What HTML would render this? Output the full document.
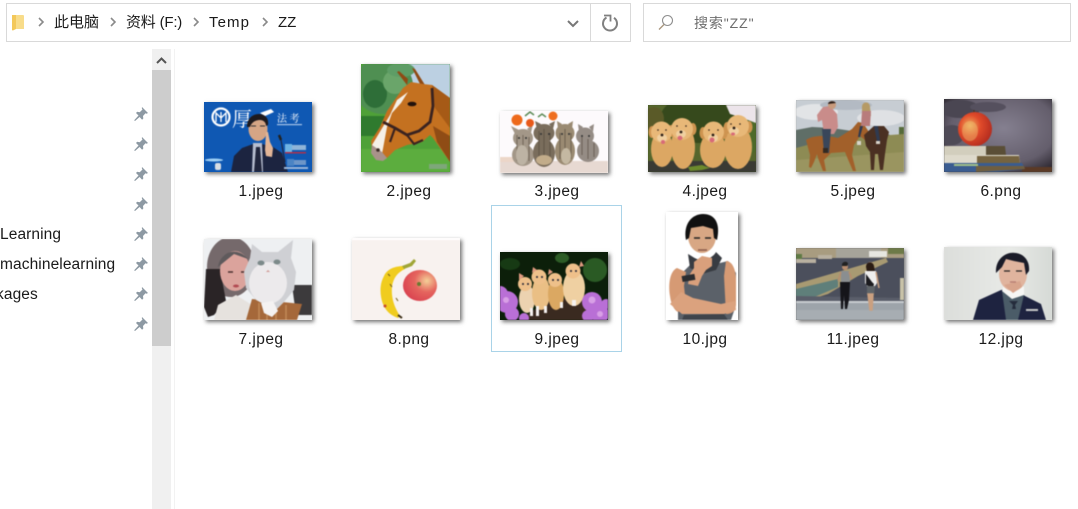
<!DOCTYPE html>
<html><head><meta charset="utf-8"><style>
html,body{margin:0;padding:0;background:#fff}
body{width:1078px;height:509px;position:relative;overflow:hidden;font-family:"Liberation Sans","Noto Sans CJK SC",sans-serif;color:#1a1a1a}
.a{position:absolute}
.t{position:absolute;white-space:nowrap;font-size:15.5px;line-height:20px}
.l{position:absolute;white-space:nowrap;font-size:15.5px;line-height:20px;text-align:center;width:130px;letter-spacing:.45px}
.i{position:absolute;overflow:hidden;box-shadow:2px 2px 4px rgba(0,0,0,.55)}
.i svg{display:block;filter:blur(.55px)}
.pin{position:absolute;left:133px;width:16px;height:16px}
</style></head><body>
<div class="a" style="left:6px;top:3px;width:623px;height:37px;border:1px solid #d9d9d9"></div>
<div class="a" style="left:590px;top:4px;width:1px;height:37px;background:#d9d9d9"></div>
<div class="a" style="left:643px;top:3px;width:426px;height:37px;border:1px solid #d9d9d9"></div>
<svg class="a" style="left:0;top:0" width="1078" height="48" fill="none">
<path d="M12 15h11.500l.5 1v13H14l-2 1.500z" fill="#f8dc8a"/><path d="M12 15h4v14l-3 1.500-1-.5z" fill="#f3c85a"/>
<path d="M39 18l4 4-4 4M111 18l4 4-4 4M194 18l4 4-4 4M263 18l4 4-4 4" stroke="#8a8a8a" stroke-width="1.600"/>
<path d="M568 21l5 5 5-5" stroke="#777" stroke-width="2"/>
<path d="M606.500 17.500a7 7 0 1 0 7.500 .3" stroke="#808080" stroke-width="2" fill="none"/><path d="M604 15.500h6.500v6" stroke="#808080" stroke-width="1.800" fill="none"/>
<circle cx="667.500" cy="20.500" r="5" stroke="#8f8f8f" stroke-width="1.100"/><path d="M664 24.500l-5 5" stroke="#a8957c" stroke-width="1.300"/>
</svg>
<div class="t" style="left:54px;top:13px;font-size:15px">此电脑</div>
<div class="t" style="left:126px;top:13px;font-size:15px;letter-spacing:-.2px">资料 (F:)</div>
<div class="t" style="left:209px;top:13px;font-size:15px;letter-spacing:1.100px">Temp</div>
<div class="t" style="left:278px;top:13px;font-size:15px">ZZ</div>
<div class="t" style="left:694px;top:13px;font-size:14px;color:#6d6d6d;letter-spacing:.9px">搜索"ZZ"</div>

<div class="a" style="left:152px;top:49px;width:19px;height:460px;background:#f0f0f0"></div>
<div class="a" style="left:152px;top:70px;width:19px;height:276px;background:#cdcdcd"></div>
<div class="a" style="left:174px;top:49px;width:1px;height:460px;background:#f2f2f2"></div>
<svg class="a" style="left:152px;top:49px" width="19" height="21" fill="none"><path d="M5 14l4.500-4.500L14 14" stroke="#555" stroke-width="2"/></svg>

<div class="t" style="left:0;top:225px;letter-spacing:.1px">Learning</div>
<div class="t" style="left:0;top:255px;letter-spacing:.1px">machinelearning</div>
<div class="t" style="left:-4px;top:285px;letter-spacing:.1px">kages</div>

<svg class="pin" style="top:106px" viewBox="0 0 16 16"><path d="M9 1l6 6-1.500 .8-1-.6-2.500 2.800.3 2.500-1.200 1.200-2.500-2.700L2 15l-.8-.8 4.300-4.700L3 7l1.200-1.200 2.500.4L9.500 3.500 8.800 2.300z" fill="#8d99a3"/></svg>
<svg class="pin" style="top:136px" viewBox="0 0 16 16"><path d="M9 1l6 6-1.500 .8-1-.6-2.500 2.800.3 2.500-1.200 1.200-2.500-2.700L2 15l-.8-.8 4.300-4.700L3 7l1.200-1.200 2.500.4L9.500 3.500 8.800 2.300z" fill="#8d99a3"/></svg>
<svg class="pin" style="top:166px" viewBox="0 0 16 16"><path d="M9 1l6 6-1.500 .8-1-.6-2.500 2.800.3 2.500-1.200 1.200-2.500-2.700L2 15l-.8-.8 4.300-4.700L3 7l1.200-1.200 2.500.4L9.500 3.500 8.800 2.300z" fill="#8d99a3"/></svg>
<svg class="pin" style="top:196px" viewBox="0 0 16 16"><path d="M9 1l6 6-1.500 .8-1-.6-2.500 2.800.3 2.500-1.200 1.200-2.500-2.700L2 15l-.8-.8 4.300-4.700L3 7l1.200-1.200 2.500.4L9.500 3.500 8.800 2.300z" fill="#8d99a3"/></svg>
<svg class="pin" style="top:226px" viewBox="0 0 16 16"><path d="M9 1l6 6-1.500 .8-1-.6-2.500 2.800.3 2.500-1.200 1.200-2.500-2.700L2 15l-.8-.8 4.300-4.700L3 7l1.200-1.200 2.500.4L9.500 3.500 8.800 2.300z" fill="#8d99a3"/></svg>
<svg class="pin" style="top:256px" viewBox="0 0 16 16"><path d="M9 1l6 6-1.500 .8-1-.6-2.500 2.800.3 2.500-1.200 1.200-2.500-2.700L2 15l-.8-.8 4.300-4.700L3 7l1.200-1.200 2.500.4L9.500 3.500 8.800 2.300z" fill="#8d99a3"/></svg>
<svg class="pin" style="top:286px" viewBox="0 0 16 16"><path d="M9 1l6 6-1.500 .8-1-.6-2.500 2.800.3 2.500-1.200 1.200-2.500-2.700L2 15l-.8-.8 4.300-4.700L3 7l1.200-1.200 2.500.4L9.500 3.500 8.800 2.300z" fill="#8d99a3"/></svg>
<svg class="pin" style="top:316px" viewBox="0 0 16 16"><path d="M9 1l6 6-1.500 .8-1-.6-2.500 2.800.3 2.500-1.200 1.200-2.500-2.700L2 15l-.8-.8 4.300-4.700L3 7l1.200-1.200 2.500.4L9.500 3.500 8.800 2.300z" fill="#8d99a3"/></svg>

<div class="a" style="left:491px;top:205px;width:129px;height:145px;border:1px solid #a9d3e8"></div>

<!-- 1 -->
<div class="i" style="left:204px;top:102px;width:108px;height:70px;background:#0f58b3"><svg width="108" height="70">
<rect width="108" height="70" fill="#0f58b3"/>
<circle cx="17" cy="15" r="8.500" fill="none" stroke="#fff" stroke-width="2.200"/><path d="M12 20v-9l5 5 5-5v9M17 10v10" stroke="#fff" stroke-width="1.300" fill="none"/>
<text x="28" y="24" font-size="20" fill="#fff" font-family="Noto Serif CJK SC">厚</text>
<path d="M56 11l11-4 3 3-9 4z" fill="#fff"/>
<text x="73" y="20" font-size="10" fill="#fff" font-family="Noto Serif CJK SC">法 考</text>
<rect x="73" y="22" width="25" height="1.200" fill="#a8c5e8"/>
<path d="M27 70l3-16 8-8 11-4h9l11 3 9 6 6 19z" fill="#1c2440"/>
<path d="M49 41h9l1 29H48z" fill="#b6bdcf"/><path d="M52 45h4l2 25h-8z" fill="#20253c"/>
<ellipse cx="54" cy="27" rx="9.500" ry="12" fill="#d5a585"/>
<path d="M43 25c0-9 6-13 12-13s10 4 9 11l-2 1c0-4-3-6-6-6s-8 1-10 7z" fill="#1e1a1e"/>
<path d="M47 24h5M56 24h5" stroke="#333" stroke-width="1"/>
<path d="M61 48l1-18h2l2 10 3 6-1 9-6-1z" fill="#e2b597"/>
<path d="M75 33l2 5" stroke="#222" stroke-width="2.500"/><path d="M77 38l4 22" stroke="#223" stroke-width="1"/>
<rect x="81" y="42" width="7" height="8" fill="#6fb4e4"/><rect x="88" y="43" width="14" height="5" fill="#8fb4d8"/><rect x="81" y="50" width="21" height="1.500" fill="#b0304a"/>
<rect x="83" y="57" width="7" height="7" fill="#4b84c4"/><rect x="90" y="58" width="12" height="5" fill="#6d96c8"/><rect x="80" y="65" width="24" height="2" fill="#9bb6d8"/>
<ellipse cx="10" cy="58" rx="9" ry="1.500" fill="#9fd0f5"/><rect x="11" y="61" width="6" height="7" fill="#d8dee4" rx="2"/>
</svg></div>
<div class="l" style="left:196px;top:182px">1.jpeg</div>

<!-- 2 -->
<div class="i" style="left:361px;top:64px;width:89px;height:108px;background:#4c9a3a"><svg width="89" height="108">
<rect width="89" height="108" fill="#4fa138"/>
<rect x="40" width="49" height="34" fill="#bcd0e2"/>
<ellipse cx="22" cy="22" rx="30" ry="28" fill="#4f8f52"/><ellipse cx="14" cy="30" rx="12" ry="14" fill="#2e6e38"/><ellipse cx="34" cy="18" rx="12" ry="12" fill="#6aa56a"/><ellipse cx="40" cy="6" rx="14" ry="7" fill="#5e9d66"/>
<rect y="52" width="40" height="20" fill="#2f7a2e"/>
<rect y="85" width="89" height="23" fill="#5cad3e"/>
<path d="M46 21L36 8l2-1 9 8zM61 24L51 4l3 1 10 16z" fill="#8f4a14"/>
<path d="M42 24l8-6 12 2 9 1 18 13v64L72 74l-3-3-8 7-15 3-12 5-8 8-8-2-7-7-1-8 9-14 7-16z" fill="#c47120"/>
<path d="M71 21l18 13v30L74 44z" fill="#a65a16"/><path d="M72 62l17 10v26L76 78z" fill="#8f4c15"/>
<path d="M47 28l-11 8-7 15-18 30 2 7 8 2 5-27 5-14 9-10z" fill="#f5f0e8"/>
<path d="M11 81l10 7 5 6-4 3-7-1-5-7z" fill="#a9928a"/><circle cx="17" cy="86" r="1.800" fill="#3b2a25"/>
<ellipse cx="51" cy="40" rx="4.500" ry="2.300" fill="#21120c"/>
<path d="M22 58l12 6 12 7 12-4 11-9 3-16-1-18" fill="none" stroke="#3a2320" stroke-width="2.800"/>
<path d="M46 71l7 9 9-4M34 64l-5 14" fill="none" stroke="#3a2320" stroke-width="2.200"/>
<rect x="68" y="100" width="18" height="5" fill="#7ea77a"/>
</svg></div>
<div class="l" style="left:344px;top:182px">2.jpeg</div>

<!-- 3 -->
<div class="i" style="left:500px;top:111px;width:108px;height:62px;background:#fdfafc"><svg width="108" height="62">
<rect width="108" height="62" fill="#fdfafc"/>
<rect y="50" width="108" height="12" fill="#e7d9d2"/><path d="M0 46h14v5H0z" fill="#ecd6c8"/>
<g fill="#a39788"><ellipse cx="23" cy="44" rx="11" ry="11"/><ellipse cx="23" cy="27" rx="10" ry="9"/><path d="M11 15l4 8 4-4zM33 13l-2 9-4-4z"/></g>
<g fill="#7a6d5c"><ellipse cx="44" cy="42" rx="11" ry="14"/><ellipse cx="44" cy="22" rx="10.500" ry="9"/><path d="M35 10l2 8 4-5zM55 10l-2 8-4-5z"/></g>
<g fill="#9a8a72"><ellipse cx="65" cy="40" rx="10" ry="14"/><ellipse cx="65" cy="22" rx="9.500" ry="9"/><path d="M57 10l1 8 4-5zM73 10l-1 8-4-5z"/></g>
<g fill="#958c85"><ellipse cx="88" cy="40" rx="11" ry="11"/><ellipse cx="85" cy="25" rx="9" ry="8.500"/><path d="M78 13l1 8 4-5zM94 13l-1 8-4-5z"/></g>
<path d="M17 24v26M23 24v28M29 26v24M39 20v30M44 18v34M50 22v28M60 22v26M65 18v30M71 22v26M82 26v18M88 28v20M94 32v14" stroke="#4f4538" stroke-width="1.100" opacity=".55"/>
<ellipse cx="44" cy="49" rx="8" ry="5" fill="#c2ac8a"/><ellipse cx="66" cy="45" rx="5" ry="8" fill="#c4b8a2"/><ellipse cx="22" cy="44" rx="6" ry="10" fill="#bdb3a4"/>
<g fill="#333"><circle cx="19" cy="27" r="1"/><circle cx="26" cy="27" r="1"/><circle cx="41" cy="23" r="1"/><circle cx="49" cy="23" r="1"/><circle cx="62" cy="23" r="1"/><circle cx="69" cy="23" r="1"/><circle cx="82" cy="25" r="1"/><circle cx="89" cy="25" r="1"/></g>
<path d="M25 5l5-4 4 3M38 6l4-3 4 3" stroke="#5b8a55" stroke-width="1.500" fill="none"/>
<circle cx="17" cy="9" r="5.500" fill="#ee6a1c"/><circle cx="30" cy="12" r="4" fill="#e8591a"/><circle cx="53" cy="5" r="4.500" fill="#ef6f20"/>
</svg></div>
<div class="l" style="left:492px;top:182px">3.jpeg</div>

<!-- 4 -->
<div class="i" style="left:648px;top:105px;width:108px;height:67px;background:#45572a"><svg width="108" height="67">
<rect width="108" height="67" fill="#55662c"/>
<ellipse cx="50" cy="14" rx="38" ry="24" fill="#36491c"/><ellipse cx="100" cy="30" rx="12" ry="20" fill="#4d6a2a"/><ellipse cx="6" cy="14" rx="10" ry="12" fill="#5a5a28"/>
<path d="M78 0h30v18l-16-6-10-3z" fill="#ece4ea"/>
<rect y="56" width="108" height="11" fill="#3a3a34"/>
<g fill="#dca763">
<ellipse cx="14" cy="44" rx="11" ry="18"/><ellipse cx="35" cy="42" rx="12" ry="22"/><ellipse cx="65" cy="45" rx="13" ry="18"/><ellipse cx="90" cy="42" rx="14" ry="22"/>
</g>
<g fill="#ce9450"><ellipse cx="4" cy="27" rx="3.500" ry="6"/><ellipse cx="23" cy="26" rx="3.500" ry="6"/><ellipse cx="45" cy="24" rx="3.500" ry="6"/><ellipse cx="55" cy="28" rx="3.500" ry="6"/><ellipse cx="76" cy="28" rx="3.500" ry="6"/><ellipse cx="79" cy="23" rx="3.500" ry="6"/><ellipse cx="101" cy="22" rx="3.500" ry="6"/></g>
<g fill="#e8b878"><circle cx="13.500" cy="27" r="10.500"/><circle cx="34" cy="24" r="11"/><circle cx="65.500" cy="27" r="10.500"/><circle cx="90" cy="21" r="11"/></g>
<g fill="#f0d0a0"><ellipse cx="14" cy="33" rx="5" ry="4"/><ellipse cx="33" cy="29" rx="5" ry="4"/><ellipse cx="65" cy="33" rx="5" ry="4"/><ellipse cx="86" cy="26" rx="5" ry="4"/></g>
<g fill="#2a1c14"><circle cx="14" cy="30" r="1.400"/><circle cx="33" cy="27" r="1.400"/><circle cx="65" cy="30" r="1.400"/><circle cx="86" cy="23" r="1.400"/><circle cx="10" cy="25" r=".8"/><circle cx="18" cy="25" r=".8"/><circle cx="29" cy="21" r=".8"/><circle cx="38" cy="21" r=".8"/><circle cx="61" cy="25" r=".8"/><circle cx="70" cy="25" r=".8"/><circle cx="83" cy="19" r=".8"/><circle cx="92" cy="19" r=".8"/></g>
<g fill="#d86a78"><ellipse cx="15" cy="37" rx="2" ry="2"/><ellipse cx="32" cy="33" rx="2.500" ry="2.200"/><ellipse cx="64" cy="35" rx="2.500" ry="2.500"/><ellipse cx="85" cy="29" rx="2" ry="1.500"/></g>
<path d="M40 62l14-2 8 3-8 2-12 1z" fill="#6c8a2c"/>
</svg></div>
<div class="l" style="left:640px;top:182px">4.jpeg</div>

<!-- 5 -->
<div class="i" style="left:796px;top:100px;width:108px;height:72px;background:#aaa"><svg width="108" height="72">
<rect width="108" height="72" fill="#c7cdd3"/>
<ellipse cx="20" cy="12" rx="22" ry="8" fill="#e2e4e6"/><ellipse cx="85" cy="18" rx="24" ry="8" fill="#dfe1e4"/><ellipse cx="50" cy="5" rx="26" ry="5" fill="#b3bac3"/>
<path d="M0 30l16-3 20 1 20 3 30 1 22 8v12H0z" fill="#5f6e67"/>
<rect x="103" y="27" width="5" height="8" fill="#566b3a"/>
<path d="M0 48l30-8 78-6v38H0z" fill="#8d8b54"/><path d="M0 60l108-8v20H0z" fill="#9a9560"/>
<path d="M10 40c8-6 24-4 32-2l14-9 6-7 5 1 6 9 2 8-5 1-6-5-6 9-2 10 4 16h-3l-6-14-2-5-14 1-7 7 2 11h-3l-5-13-1-4-3 8-3 6-2-1 1-12z" fill="#a2602a"/>
<path d="M28 34h10l4-7-1-13-7-8-7 1-6 8 1 7 4-2z" fill="#c98c8a"/>
<circle cx="36" cy="5" r="4" fill="#c89a7c"/><path d="M32 4c0-3 6-4 8-1z" fill="#2a1d18"/>
<path d="M26 29h9l-2 24-5 0z" fill="#39465a"/><rect x="27" y="48" width="5" height="5" fill="#332a22"/>
<path d="M68 35l10-9h10l5 6-2 8-2 14-2 16h-3l-2-16-3 0-1 16h-3l-1-18-4-6z" fill="#4a3022"/>
<circle cx="70" cy="6" r="3.500" fill="#d6b090"/><path d="M66 7c0-6 8-6 8 0l1 9h-9z" fill="#b59a65"/>
<path d="M66 11h9l-1 15h-9z" fill="#b87c7c"/>
<path d="M64 26h3l-3 11h-2zM78 26h4l2 15h-3z" fill="#2f3a50"/><rect x="61" y="41" width="4" height="4" fill="#d8d4ca"/><rect x="80" y="41" width="4" height="3" fill="#d8d4ca"/>
</svg></div>
<div class="l" style="left:788px;top:182px">5.jpeg</div>

<!-- 6 -->
<div class="i" style="left:944px;top:99px;width:108px;height:73px;background:#444"><svg width="108" height="73">
<defs><radialGradient id="b6" cx=".55" cy=".4" r=".75"><stop offset="0" stop-color="#858090"/><stop offset=".65" stop-color="#645e6c"/><stop offset="1" stop-color="#1f1a22"/></radialGradient>
<radialGradient id="a6" cx=".35" cy=".4" r=".7"><stop offset="0" stop-color="#f0b060"/><stop offset=".45" stop-color="#e04a2a"/><stop offset="1" stop-color="#b02a1e"/></radialGradient></defs>
<rect width="108" height="73" fill="url(#b6)"/>
<ellipse cx="16" cy="10" rx="20" ry="9" fill="#4a4652"/><ellipse cx="44" cy="8" rx="18" ry="5" fill="#55505e"/><ellipse cx="8" cy="36" rx="12" ry="10" fill="#4e4a56"/>
<path d="M78 68h30v5H78z" fill="#5b3a26"/>
<circle cx="31" cy="30" r="17" fill="url(#a6)"/><path d="M30 13v-2" stroke="#4a3216" stroke-width="1"/><ellipse cx="26" cy="32" rx="8" ry="10" fill="#f0c070" opacity=".45"/>
<path d="M0 47h60v1l1 8-9 1H0z" fill="#d2cebd"/><path d="M42 47h19l1 9H42z" fill="#5a4e36"/>
<path d="M0 56h75l1 8-26 3H0z" fill="#dedacc"/><path d="M33 57h42l1 7-43 3z" fill="#75633f"/>
<path d="M0 64h78l3 6-28 3H0z" fill="#3a5c90"/><path d="M32 67h48l1 3-49 3z" fill="#6f5e40"/><path d="M10 65h24v2H10z" fill="#a2c08a"/>
</svg></div>
<div class="l" style="left:936px;top:182px">6.png</div>

<!-- 7 -->
<div class="i" style="left:204px;top:239px;width:108px;height:81px;background:#eee"><svg width="108" height="81">
<rect width="108" height="81" fill="#eef0f2"/>
<path d="M88 46h20v30H92z" fill="#3c3a3c"/>
<ellipse cx="27" cy="28" rx="24" ry="30" fill="#75696b"/><path d="M2 30l14 0 6 32-12 14-6 2-4-10z" fill="#2a2426"/>
<ellipse cx="31" cy="32" rx="15" ry="20" fill="#dba39c"/>
<path d="M14 28c2-14 18-22 30-8l-14-5z" fill="#5f5a5c"/>
<path d="M24 33h5M37 33h5" stroke="#4a3030" stroke-width="1.500"/><ellipse cx="32" cy="47" rx="3" ry="1.500" fill="#b24a52"/>
<path d="M14 66l18-10 16 10 0 15H10z" fill="#e6e2de"/>
<path d="M48 60l50 5-5 16H42z" fill="#a5683a"/><path d="M55 64v17M63 66v15M72 66v15M82 66v15" stroke="#c28a58" stroke-width="1.500"/>
<path d="M48 5l10 8 16 0 15-12-2 18 5 14-2 18-10 12-8 8-6 2-6-8-8-4-10-12-2-16 6-14z" fill="#cfd0d4"/>
<ellipse cx="64" cy="44" rx="19" ry="21" fill="#eceaec"/><path d="M57 64l12-2 5 10-6 6-8-4z" fill="#f4f2f2"/>
<ellipse cx="57" cy="24" rx="3.500" ry="2.500" fill="#7c8a8a"/><ellipse cx="73" cy="23" rx="3.500" ry="2.500" fill="#7c8a8a"/><path d="M64 31l-2 2h4z" fill="#d09a96"/>
</svg></div>
<div class="l" style="left:196px;top:330px">7.jpeg</div>

<!-- 8 -->
<div class="i" style="left:352px;top:238px;width:108px;height:82px;background:#f8f2ef"><svg width="108" height="82">
<rect width="108" height="82" fill="#f8f2ef"/><rect width="108" height="2" fill="#fff"/>
<path d="M52 28c-9 0-17 3-20 10-5 9-4 20-1 28 3 7 7 11 15 14l2-2c-5-8-9-17-8-29 1-9 6-15 13-18z" fill="#f0cc1e"/>
<path d="M50 28l8-3 4-4 2 2-4 5-8 3z" fill="#a0a636"/>
<path d="M38 46l2 3M44 60l2 3M36 36l2 2" stroke="#6e5a18" stroke-width="1"/><circle cx="33" cy="68" r="1.500" fill="#c84a2a"/>
<path d="M46 77l4 3" stroke="#3a2c14" stroke-width="2"/>
<defs><radialGradient id="a8" cx=".7" cy=".35" r=".8"><stop offset="0" stop-color="#f4d098"/><stop offset=".45" stop-color="#e5655e"/><stop offset="1" stop-color="#d83e4e"/></radialGradient></defs>
<ellipse cx="68" cy="47.500" rx="17" ry="15.500" fill="url(#a8)"/><circle cx="67" cy="46" r="2" fill="#6a7a30"/>
</svg></div>
<div class="l" style="left:344px;top:330px">8.png</div>

<!-- 9 -->
<div class="i" style="left:500px;top:252px;width:108px;height:68px;background:#0c1f0a"><svg width="108" height="68">
<rect width="108" height="68" fill="#0c1f0a"/>
<ellipse cx="95" cy="18" rx="12" ry="12" fill="#2a5a24"/><ellipse cx="62" cy="6" rx="7" ry="5" fill="#2d5c26"/><ellipse cx="10" cy="12" rx="10" ry="6" fill="#173a14"/>
<path d="M28 62l18-12 40-8 10 20v6H28z" fill="#3a2a20"/>
<ellipse cx="27" cy="47" rx="8" ry="14" fill="#ecd2b0"/><ellipse cx="41" cy="41" rx="9" ry="17" fill="#eabf85"/><ellipse cx="56" cy="42" rx="8" ry="16" fill="#dba862"/><ellipse cx="74" cy="36" rx="11" ry="18" fill="#efd0a2"/>
<g fill="#eec08a"><circle cx="25" cy="32" r="7"/><circle cx="39" cy="25" r="7.500"/><circle cx="55" cy="28" r="7"/><circle cx="73" cy="19" r="7.500"/></g>
<g fill="#e09a80"><path d="M19 28l0-7 5 3zM32 21l1-6 4 3zM48 23l1-6 4 3zM79 15l2-6 3 5z"/></g>
<g fill="#223"><circle cx="23" cy="32" r="1"/><circle cx="28" cy="32" r="1"/><circle cx="37" cy="25" r="1"/><circle cx="42" cy="25" r="1"/><circle cx="53" cy="28" r="1"/><circle cx="58" cy="28" r="1"/><circle cx="71" cy="19" r="1"/><circle cx="76" cy="19" r="1"/></g>
<g fill="#f6f2f0"><rect x="30" y="56" width="3" height="8"/><rect x="36" y="54" width="3" height="10"/><rect x="44" y="54" width="3" height="7"/><rect x="60" y="50" width="3" height="6"/><rect x="72" y="48" width="4" height="6"/></g>
<g fill="#b96fd6"><circle cx="7" cy="50" r="11"/><circle cx="12" cy="62" r="7"/><circle cx="24" cy="66" r="5"/><circle cx="0" cy="42" r="8"/><circle cx="92" cy="50" r="10"/><circle cx="100" cy="62" r="9"/><circle cx="88" cy="64" r="6"/><circle cx="106" cy="52" r="5"/></g>
<g fill="#d8a0e6"><circle cx="6" cy="48" r="3"/><circle cx="92" cy="48" r="3.500"/><circle cx="100" cy="62" r="3"/></g>
</svg></div>
<div class="l" style="left:492px;top:330px">9.jpeg</div>

<!-- 10 -->
<div class="i" style="left:666px;top:212px;width:72px;height:108px;background:#fff"><svg width="72" height="108">
<rect width="72" height="108" fill="#fff"/>
<path d="M12 108V95l5-35 8-8h25l12-3 8 12-1 35-4 12z" fill="#5b6169"/>
<path d="M11 56c-7 3-9 16-7 28 1 8 4 14 8 16l8-8-2-18 2-14z" fill="#d69a74"/>
<path d="M60 49c6 0 10 8 10 20v24c-1 8-6 9-10 9l-2-38z" fill="#d69a74"/>
<path d="M4 92l12 10 42 0 12-4-1-9-14 3-28-6-12-6z" fill="#dba27e"/>
<path d="M18 103l40-1 4 6H16z" fill="#3f444b"/>
<path d="M22 42c4 2 8 6 14 6s12-4 14-8l6 6-6 12-14 4-12-6z" fill="#383c42"/>
<ellipse cx="36" cy="24" rx="14" ry="17" fill="#d8a784"/>
<path d="M20 28C17 12 26 2 37 2c11 0 18 8 14 26l-3-2-1-9-10-3-12 2-2 10z" fill="#111"/>
<path d="M28 26h6M39 26h6" stroke="#222" stroke-width="1.500"/><path d="M32 38h9" stroke="#8a5a4a" stroke-width="1.500"/>
<path d="M28 50l8-6 10 2 0 8-6 4-4 6-4 10-10-2 2-10 4-6z" fill="#d9a07c"/>
<rect x="16" y="63" width="13" height="6" fill="#2b2d30" transform="rotate(-10 22 66)"/>
</svg></div>
<div class="l" style="left:640px;top:330px">10.jpg</div>

<!-- 11 -->
<div class="i" style="left:796px;top:248px;width:108px;height:72px;background:#666"><svg width="108" height="72">
<rect width="108" height="72" fill="#4b4f5c"/>
<rect width="108" height="10" fill="#a89c80"/><path d="M40 0h45v10H40z" fill="#a6a49a"/><rect x="73" y="3" width="18" height="6" fill="#e6e6e0"/><rect x="92" y="0" width="16" height="6" fill="#6d7a48"/>
<path d="M0 6h6v5H0z" fill="#5f7a44"/><path d="M0 11h20v4H0zM22 7h14v4H22z" fill="#b8b0a0"/>
<path d="M0 36l90-26 2 4-30 14-30 18-32 10z" fill="#a89a72"/><path d="M0 41l42-10 0 8-26 11-16 5z" fill="#5f7f7a"/>
<path d="M0 48v8h108v-6z" fill="#5a5e6a"/>
<rect y="53" width="108" height="19" fill="#9da4aa"/><rect y="53" width="108" height="2" fill="#c8ccd0"/><path d="M0 62h108v10H0z" fill="#a7adb2"/>
<path d="M104 30h4v22h-4z" fill="#c8c2a8"/>
<g><circle cx="49" cy="19" r="3" fill="#b78c6e"/><path d="M46 16c1-3 6-3 6 0l-1 2-5 0z" fill="#222"/><path d="M45 23h8l1 11-9 0z" fill="#8a8e90"/><path d="M44 34h10l-1 18-2 9h-2l-1-14-1 14h-2z" fill="#15151a"/><path d="M45 24l-3 9M53 24l3 7" stroke="#b78c6e" stroke-width="1.500"/></g>
<g><circle cx="74" cy="17" r="3" fill="#caa080"/><path d="M70 19c0-6 7-6 8-1l1 6-8 0z" fill="#2a1c14"/><path d="M69 23h11l1 12-2 3h-8l-2-3z" fill="#eee"/><path d="M70 26l6 8 2 2-1 4-7-3z" fill="#1b1b1f"/><path d="M71 38h8l-1 9h-7z" fill="#5f6468"/><path d="M72 46l2 16h2l1-16zM80 24l3 16" stroke="#caa080" stroke-width="1.500" fill="#caa080"/></g>
</svg></div>
<div class="l" style="left:788px;top:330px">11.jpeg</div>

<!-- 12 -->
<div class="i" style="left:944px;top:247px;width:108px;height:73px;background:#e0e2df"><svg width="108" height="73">
<defs><linearGradient id="b12" x1="0" x2="1"><stop offset="0" stop-color="#dcdedb"/><stop offset=".6" stop-color="#e8eae7"/><stop offset="1" stop-color="#d6dad6"/></linearGradient></defs>
<rect width="108" height="73" fill="url(#b12)"/>
<path d="M29 73l6-20 22-10 14-2 10 8 16 8 5 16z" fill="#1e2340"/>
<path d="M58 44l13-4 9 8-6 25H62z" fill="#4b5c68"/><path d="M58 44l10 8 12-4 0-8-8-4-12 2z" fill="#f6f6f4"/><path d="M65 54h9l-3 4 1 4-4 0 1-4z" fill="#252c3c"/>
<ellipse cx="69" cy="27" rx="14" ry="17" fill="#e0b49e"/><path d="M60 38l9 8 9-6-2-6z" fill="#d8a48c"/>
<path d="M52 26c-1-14 10-22 20-20 8 1 14 8 13 18l-3 4-2-12-10-2-8-2-4 8z" fill="#1a1b28"/>
<path d="M60 24h6M72 24h6" stroke="#222" stroke-width="1.300"/><path d="M66 35h6" stroke="#b47a70" stroke-width="1.300"/>
<rect x="82" y="62" width="12" height="2" fill="#c8c8c8"/>
</svg></div>
<div class="l" style="left:936px;top:330px">12.jpg</div>
</body></html>
